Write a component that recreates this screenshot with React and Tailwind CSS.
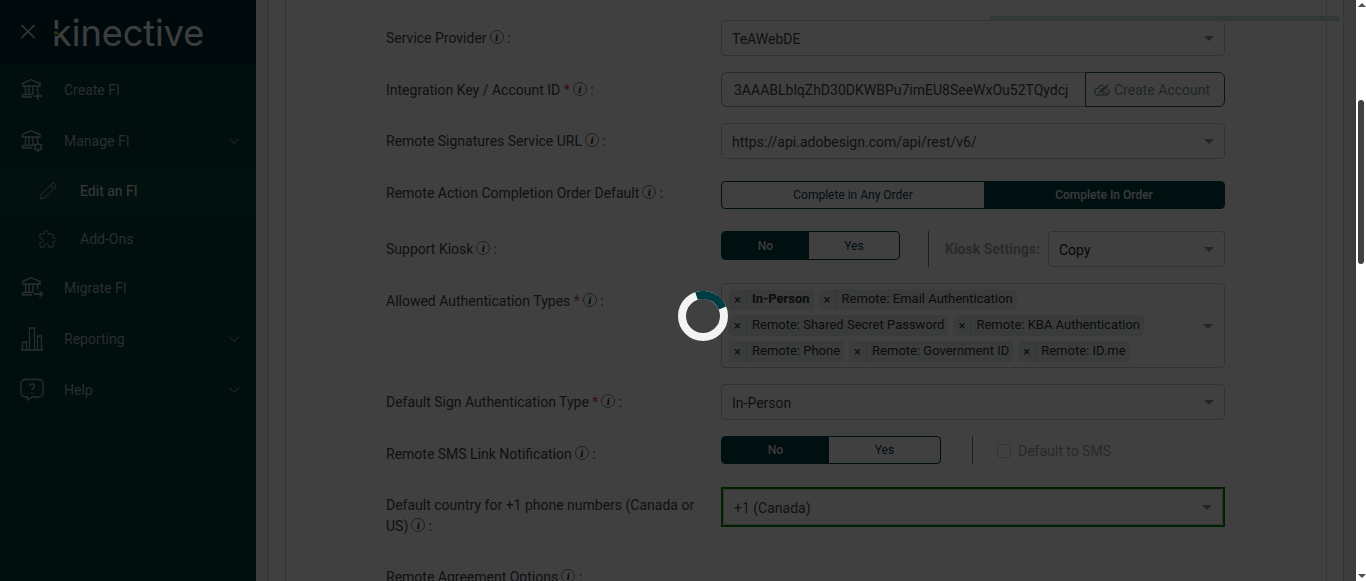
import React, { useState } from 'react';

const BankIcon = ({ badge }) => (
  <svg width="24" height="24" viewBox="0 0 24 24" fill="none" stroke="currentColor" strokeWidth="1.4" aria-hidden="true">
    <path d="M2.500 8V5.500L11 1.700l9 3.800V8z" />
    <path d="M5.500 8v8.500M9 8v8.500M13 8v8.500M17.500 8v5.500" />
    <path d="M13 16.500H2.500V19H12" />
    {badge === 'plus' && <path d="M18 14v8M14 18h8" />}
    {badge === 'arrow' && <path d="M14 18h9M19.500 15l3.300 3-3.300 3" />}
    {badge === 'gear' && (
      <>
        <circle cx="18" cy="18" r="3" />
        <path d="M18 13v2M18 21v2M13.700 15.500l1.700 1M20.600 19.500l1.700 1M13.700 20.500l1.700-1M20.600 16.500l1.700-1" />
      </>
    )}
  </svg>
);

const PencilIcon = () => (
  <svg width="18" height="18" viewBox="0 0 18 18" fill="none" stroke="currentColor" aria-hidden="true">
    <path d="M1.500 16.800l1-4.500L12.800 1.900a2 2 0 0 1 2.900 0l.6.6a2 2 0 0 1 0 2.900L6 15.800zM11.500 3.200l3.500 3.500" />
  </svg>
);

const PuzzleIcon = () => (
  <svg width="18" height="18" viewBox="0 0 18 18" fill="none" stroke="currentColor" aria-hidden="true">
    <path d="M1 4h4.700c.5-.6-.3-1-.3-1.800C5.400 1.300 6.200.7 7.300.7s1.900.6 1.900 1.500c0 .8-.8 1.200-.3 1.800H14v4.300c.6.6 1-.2 1.700-.2.900 0 1.500.8 1.500 1.900s-.6 1.900-1.500 1.900c-.7 0-1.100-.8-1.700-.2V17H9.300c-.5-.6.2-1 .2-1.800 0-.9-1-1.400-2.100-1.400s-2.100.5-2.100 1.400c0 .8.700 1.200.2 1.800H1v-4.700c.6-.6 1 .2 1.700.2.9 0 1.500-.9 1.500-1.900s-.6-1.900-1.500-1.900C2 8.700 1.600 9.500 1 8.900z" />
  </svg>
);

const ChartIcon = () => (
  <svg width="24" height="24" viewBox="0 0 24 24" fill="none" stroke="currentColor" strokeWidth="1.300" aria-hidden="true">
    <path d="M.5 23h23M2.500 23v-8h4v8M9.500 23V1h5v22M17.500 23V9h4v14" />
  </svg>
);

const HelpIcon = () => (
  <svg width="24" height="24" viewBox="0 0 24 24" fill="none" stroke="currentColor" strokeWidth="1.300" aria-hidden="true">
    <path d="M5 1.500h14a4 4 0 0 1 4 4V15a4 4 0 0 1-4 4h-7l-4.500 3v-3H5a4 4 0 0 1-4-4V5.500a4 4 0 0 1 4-4z" />
    <path d="M9.800 8.200c0-3.300 4.600-3.100 4.600-.2 0 1.900-2.400 1.900-2.400 4M12 14v1.500" />
  </svg>
);

const ChevronIcon = () => (
  <svg className="ml-auto" width="12" height="8" viewBox="0 0 12 8" fill="none" stroke="currentColor" aria-hidden="true">
    <path d="M1 1.500l5 5 5-5" />
  </svg>
);

const SignCloudIcon = () => (
  <svg width="16" height="12" viewBox="0 0 16 12" fill="none" stroke="currentColor" strokeWidth="1.300" aria-hidden="true">
    <path d="M9.500 1.600C7.300.4 4.500 1.700 4.200 4.300 1.800 4.200.8 5.800.8 7.500.8 9.500 2.300 11 4.200 11h8c1.700 0 3-1.200 3-2.900 0-1.500-.8-2.500-2.100-2.800" />
    <path d="M4.500 8.500l2.500-3.500 6.500-4 .5 1.200-5 5.300z" fill="currentColor" strokeWidth=".6" />
    <path d="M8 8.800h5" />
  </svg>
);

const InfoIcon = () => (
  <span
    aria-hidden="true"
    className="ml-[3px] inline-flex h-3.5 w-3.5 items-center justify-center rounded-full border border-[#5f7f88] align-[2px] font-['Liberation_Serif',serif] text-[11px] leading-3 font-bold italic text-[#0f1c24]"
  >
    i
  </span>
);

const NAV_ITEMS = [
  { label: 'Create FI', icon: <BankIcon badge="plus" /> },
  {
    label: 'Manage FI',
    icon: <BankIcon badge="gear" />,
    expandable: true,
    children: [
      { label: 'Edit an FI', icon: <PencilIcon />, active: true },
      { label: 'Add-Ons', icon: <PuzzleIcon /> }
    ]
  },
  { label: 'Migrate FI', icon: <BankIcon badge="arrow" /> },
  { label: 'Reporting', icon: <ChartIcon />, expandable: true },
  { label: 'Help', icon: <HelpIcon />, expandable: true }
];

const AUTH_TYPES = [
  'In-Person',
  'Remote: Email Authentication',
  'Remote: Shared Secret Password',
  'Remote: KBA Authentication',
  'Remote: Phone',
  'Remote: Government ID',
  'Remote: ID.me'
];

const Sidebar = () => (
  <aside className="w-64 shrink-0 bg-[#003836] text-[#a9b4b4]">
    <div className="h-16 bg-[#002a30] flex items-center pl-5 gap-4">
      <button type="button" aria-label="Close menu" className="text-[#e8e8e8]">
        <svg width="16" height="16" viewBox="0 0 16 16" fill="none" stroke="currentColor" strokeWidth="1.400">
          <path d="M1.500 1l13 13M14.500 1l-13 13" />
        </svg>
      </button>
      <a href="#home" className="relative pt-0.5 font-['Inter',sans-serif] text-[36px] leading-[36px] text-[#f4f4f4]">
        kinective
        <span className="absolute left-px top-4 flex h-[7px] w-[5px] items-center justify-center bg-[#002a30]">
          <span className="h-1 w-1 rounded-full bg-[#78e040]" />
        </span>
      </a>
    </div>
    <nav className="text-sm">
      {NAV_ITEMS.map((item) => (
        <div key={item.label}>
          <a href="#nav" className="h-[51px] pt-px pl-5 pr-4 flex items-center gap-5">
            {item.icon}
            <span>{item.label}</span>
            {item.expandable && <ChevronIcon />}
          </a>
          {item.children?.map((c) => (
            <a
              key={c.label}
              href="#nav"
              className={`h-12 pt-px pl-[39px] flex items-center gap-[23px] ${c.active ? 'bg-[#084340]' : ''}`}
            >
              {c.icon}
              <span className={c.active ? 'text-[#e0e0e0]' : ''}>{c.label}</span>
            </a>
          ))}
        </div>
      ))}
    </nav>
  </aside>
);

const Row = ({ id, label, required, children, className = 'min-h-9' }) => (
  <div className={`grid grid-cols-[335px_1fr] ${className}`}>
    <label htmlFor={id} className="pt-2 pr-4 text-sm leading-[21px] text-[#3c4650]">
      {label}
      {required && <span className="text-[#d04040]"> *</span>}
      <InfoIcon /> :
    </label>
    <div>{children}</div>
  </div>
);

const Caret = () => (
  <span className="pointer-events-none absolute right-[11px] top-1/2 -mt-0.5 border-x-[5px] border-t-[5px] border-x-transparent border-t-[#909090]" />
);

const Select = ({ id, options, className = 'text-[#444444]', ...props }) => (
  <div className="relative">
    <select
      id={id}
      className={`block w-full h-9 appearance-none rounded border border-[#c8c8c8] bg-white pt-0.5 pl-2.5 pr-8 text-sm ${className}`}
      {...props}
    >
      {options.map((o) => <option key={o}>{o}</option>)}
    </select>
    <Caret />
  </div>
);

const Toggle = ({ id, options, value, onChange, className, firstClass }) => (
  <div id={id} role="group" className={`flex overflow-hidden rounded border border-[#003c3f] text-xs ${className}`}>
    {options.map((o, i) => (
      <button
        key={o}
        type="button"
        aria-pressed={value === o}
        onClick={() => onChange(o)}
        className={`${i === 0 ? firstClass : 'flex-1'} ${value === o ? 'bg-[#003c3f] text-[#e8e8e8] font-medium' : 'text-[#003c4c]'}`}
      >
        {o}
      </button>
    ))}
  </div>
);

const SettingsForm = () => {
  const [order, setOrder] = useState('Complete In Order');
  const [kiosk, setKiosk] = useState('No');
  const [sms, setSms] = useState('No');
  const [types, setTypes] = useState(AUTH_TYPES);

  return (
    <form className="flex flex-col gap-4 pt-5 pl-[100px] pr-[101px]">
      <Row id="provider" label="Service Provider">
        <Select id="provider" options={['TeAWebDE']} />
      </Row>

      <Row id="key" label="Integration Key / Account ID" required className="h-[35px]">
        <div className="flex h-[35px]">
          <input
            id="key"
            defaultValue="3AAABLblqZhD30DKWBPu7imEU8SeeWxOu52TQydcj"
            className="min-w-0 flex-1 rounded-l-md border border-r-0 border-[#a8acb0] px-3 text-sm text-[#3c4650]"
          />
          <button type="button" className="flex w-[140px] items-center gap-1 rounded-r-md border border-[#20585c] pl-2 text-sm text-[#7c9498]">
            <SignCloudIcon />
            Create Account
          </button>
        </div>
      </Row>

      <Row id="url" label="Remote Signatures Service URL">
        <Select id="url" options={['https://api.adobesign.com/api/rest/v6/']} />
      </Row>

      <Row id="order" label="Remote Action Completion Order Default">
        <div className="py-1.5">
          <Toggle
            id="order"
            options={['Complete in Any Order', 'Complete In Order']}
            value={order}
            onChange={setOrder}
            className="h-7"
            firstClass="w-[262px]"
          />
        </div>
      </Row>

      <Row id="kiosk" label="Support Kiosk">
        <div className="flex">
          <Toggle id="kiosk" options={['No', 'Yes']} value={kiosk} onChange={setKiosk} className="h-[29px] w-[179px]" firstClass="w-[87px]" />
          <div className="ml-7 flex flex-1 items-center border-l border-[#70808c] pl-4">
            <label htmlFor="kiosk-settings" className="w-[103px] text-sm font-bold text-[#a4a8ac]">Kiosk Settings:</label>
            <div className="flex-1">
              <Select id="kiosk-settings" options={['Copy']} className="text-[#202020]" />
            </div>
          </div>
        </div>
      </Row>

      <Row id="types" label="Allowed Authentication Types" required>
        <div id="types" className="relative flex h-[85px] flex-wrap content-start gap-[5px] rounded border border-[#c8c8c8] py-[5px] pl-[7px] pr-[72px]">
          {types.map((t, i) => (
            <span key={t} className="flex h-[21px] rounded-sm bg-[#e6efed] text-[13px] leading-[19px] text-[#303030]">
              <button
                type="button"
                aria-label={`Remove ${t}`}
                onClick={() => setTypes(types.filter((x) => x !== t))}
                className="h-full w-[18px] border-r border-[#ccd6d4]"
              >
                ×
              </button>
              <span className={`pl-[5px] pr-1 ${i === 0 ? 'font-bold' : ''}`}>{t}</span>
            </span>
          ))}
          <Caret />
        </div>
      </Row>

      <Row id="default-type" label="Default Sign Authentication Type" required>
        <Select id="default-type" options={['In-Person']} />
      </Row>

      <Row id="sms" label="Remote SMS Link Notification" className="h-[35px]">
        <div className="flex h-7">
          <Toggle id="sms" options={['No', 'Yes']} value={sms} onChange={setSms} className="w-[220px]" firstClass="w-[107px]" />
          <label className="ml-[31px] flex items-center gap-[7px] border-l border-[#70808c] pl-6 pt-0.5 text-sm text-[#a0a4a8]">
            <input type="checkbox" disabled className="h-3.5 w-3.5 appearance-none rounded-xs border border-[#d4d4d4]" />
            Default to SMS
          </label>
        </div>
      </Row>

      <Row id="country" label="Default country for +1 phone numbers (Canada or US)" className="h-14">
        <div className="border-2 border-[#008000]">
          <Select id="country" options={['+1 (Canada)', '+1 (US)']} />
        </div>
      </Row>

      <Row label="Remote Agreement Options" />
    </form>
  );
};

const Scrollbar = () => (
  <div className="flex w-2.5 shrink-0 flex-col items-end bg-white pt-[3px] pb-[3px]">
    <span className="border-x-4 border-b-4 border-x-transparent border-b-[#505050]" />
    <span className="mt-[93px] mr-0.5 h-[164px] w-1.5 rounded-full bg-[#404040]" />
    <span className="mt-auto border-x-4 border-t-4 border-x-transparent border-t-[#505050]" />
  </div>
);

const Spinner = () => (
  <svg className="absolute left-1/2 top-1/2" width="50" height="50" viewBox="0 0 50 50" fill="none" strokeWidth="8" role="status" aria-label="Loading">
    <circle cx="25" cy="25" r="21" stroke="#f3f3f3" />
    <path d="M18.500 5.030A21 21 0 0 1 44.500 17.100" stroke="#003c43" />
  </svg>
);

export default function App() {
  return (
    <div className="flex h-screen overflow-hidden font-['Roboto',sans-serif]">
      <div className="relative flex min-w-0 flex-1 overflow-hidden">
        <Sidebar />
        <main className="min-w-0 flex-1 bg-[#f0f0f0] px-3">
          <div className="h-full border-x border-[#d0d4d4] bg-white px-4">
            <div className="border-x border-[#d0d4d4]">
              <SettingsForm />
            </div>
          </div>
        </main>
        <div className="absolute right-4 top-4 h-[5px] w-[350px] rounded-full bg-[#c8dcdc]" />
        <div className="absolute inset-0 bg-black/75" />
        <Spinner />
      </div>
      <Scrollbar />
    </div>
  );
}
